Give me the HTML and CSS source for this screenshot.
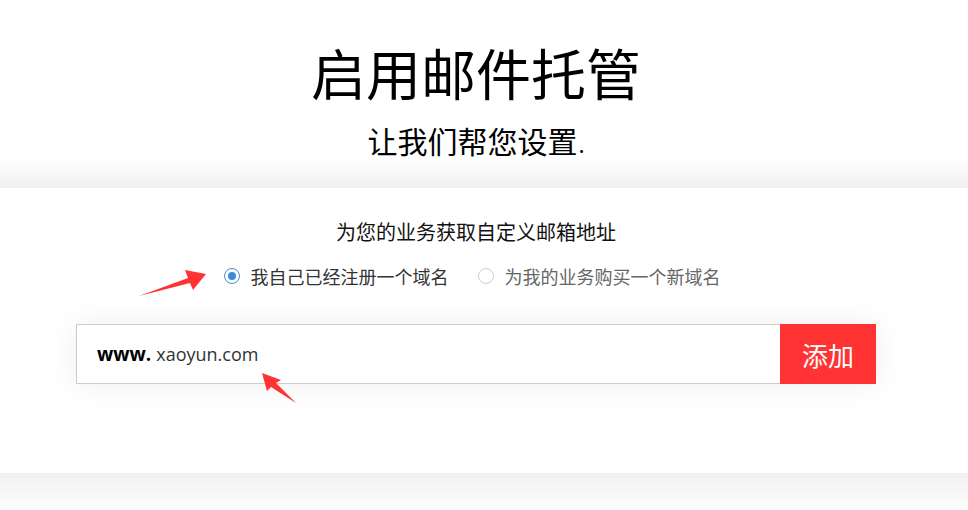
FILE: index.html
```html
<!DOCTYPE html>
<html lang="zh-CN">
<head>
<meta charset="utf-8">
<title>启用邮件托管</title>
<link rel="stylesheet" href="styles.css">
</head>
<body>
<div class="page">
  <header class="hero">
    <h1 class="title">启用邮件托管</h1>
    <p class="subtitle">让我们帮您设置<span class="dot">.</span></p>
  </header>
  <section class="panel">
    <h2 class="panel-title">为您的业务获取自定义邮箱地址</h2>
    <div class="options">
      <label class="option checked"><span class="radio"></span><span class="opt-text">我自己已经注册一个域名</span></label>
      <label class="option"><span class="radio"></span><span class="opt-text">为我的业务购买一个新域名</span></label>
    </div>
    <div class="domain-form">
      <div class="domain-input"><b class="www">www.</b><span class="domain">xaoyun.com</span></div>
      <button class="add-btn">添加</button>
    </div>
  </section>
  <footer class="foot"></footer>
  <svg class="annot" width="968" height="510" viewBox="0 0 968 510" xmlns="http://www.w3.org/2000/svg">
    <polygon fill="#ff3333" points="139,296 188,278 185,270 206,274 193,290 190,283"/>
    <polygon fill="#ff3333" points="296,403 276,383 281,380 262,373 267,391 271,387"/>
  </svg>
</div>
</body>
</html>
```
FILE: styles.css
```css
* { box-sizing: border-box; }
html, body { margin: 0; padding: 0; }
body {
  background: #fff;
  font-family: "Noto Sans CJK SC", "Noto Sans", sans-serif;
  color: #000;
}
.page {
  position: relative;
  width: 968px;
  height: 510px;
  overflow: hidden;
}
.hero {
  height: 188px;
  background: linear-gradient(to bottom, #fff 0, #fff 158px, #f0f0f0 188px);
  display: flex;
  flex-direction: column;
  align-items: center;
  padding: 39px 16px 0 0;
}
.title {
  margin: 0;
  font-size: 55px;
  line-height: 64px;
  font-weight: 400;
}
.subtitle {
  margin: 19px 0 0;
  font-size: 30px;
  line-height: 36px;
  font-weight: 400;
}
.dot {
  font-size: 22px;
  margin-left: 1px;
}
.panel {
  height: 285px;
  background: #fff;
  display: flex;
  flex-direction: column;
  align-items: center;
  padding: 30px 16px 0 0;
}
.panel-title {
  margin: 0;
  font-size: 20px;
  line-height: 28px;
  font-weight: 400;
  color: #111;
}
.options {
  display: flex;
  gap: 29px;
  margin: 17px 8px 0 0;
}
.option {
  display: flex;
  align-items: center;
  font-size: 18px;
  line-height: 26px;
  color: #666;
}
.option.checked { color: #333; }
.radio {
  width: 16px;
  height: 16px;
  border-radius: 50%;
  border: 1px solid #cfcfcf;
  margin-right: 11px;
  display: flex;
  align-items: center;
  justify-content: center;
}
.option.checked .radio { border-color: #4a90d9; }
.option.checked .radio::after {
  content: "";
  width: 8px;
  height: 8px;
  border-radius: 50%;
  background: #3d8ad6;
}
.domain-form {
  margin-top: 35px;
  display: flex;
  width: 800px;
  height: 60px;
  box-shadow: 0 0 30px rgba(0, 0, 0, 0.07);
}
.domain-input {
  flex: 1;
  border: 1px solid #cccccc;
  border-right: none;
  background: #fff;
  display: flex;
  align-items: center;
  padding-left: 20px;
  font-family: "Open Sans", "Noto Sans", sans-serif;
  font-size: 18px;
}
.www { font-weight: 700; font-size: 19px; color: #000; margin-right: 5px; }
.domain { color: #333; }
.add-btn {
  width: 96px;
  border: none;
  background: #ff3333;
  color: #fff;
  font-family: "Noto Sans CJK SC", sans-serif;
  font-size: 26px;
  padding: 0;
}
.foot {
  height: 37px;
  background: linear-gradient(to bottom, #f1f1f1, #fdfdfd);
}
.annot {
  position: absolute;
  top: 0;
  left: 0;
  pointer-events: none;
}
```
